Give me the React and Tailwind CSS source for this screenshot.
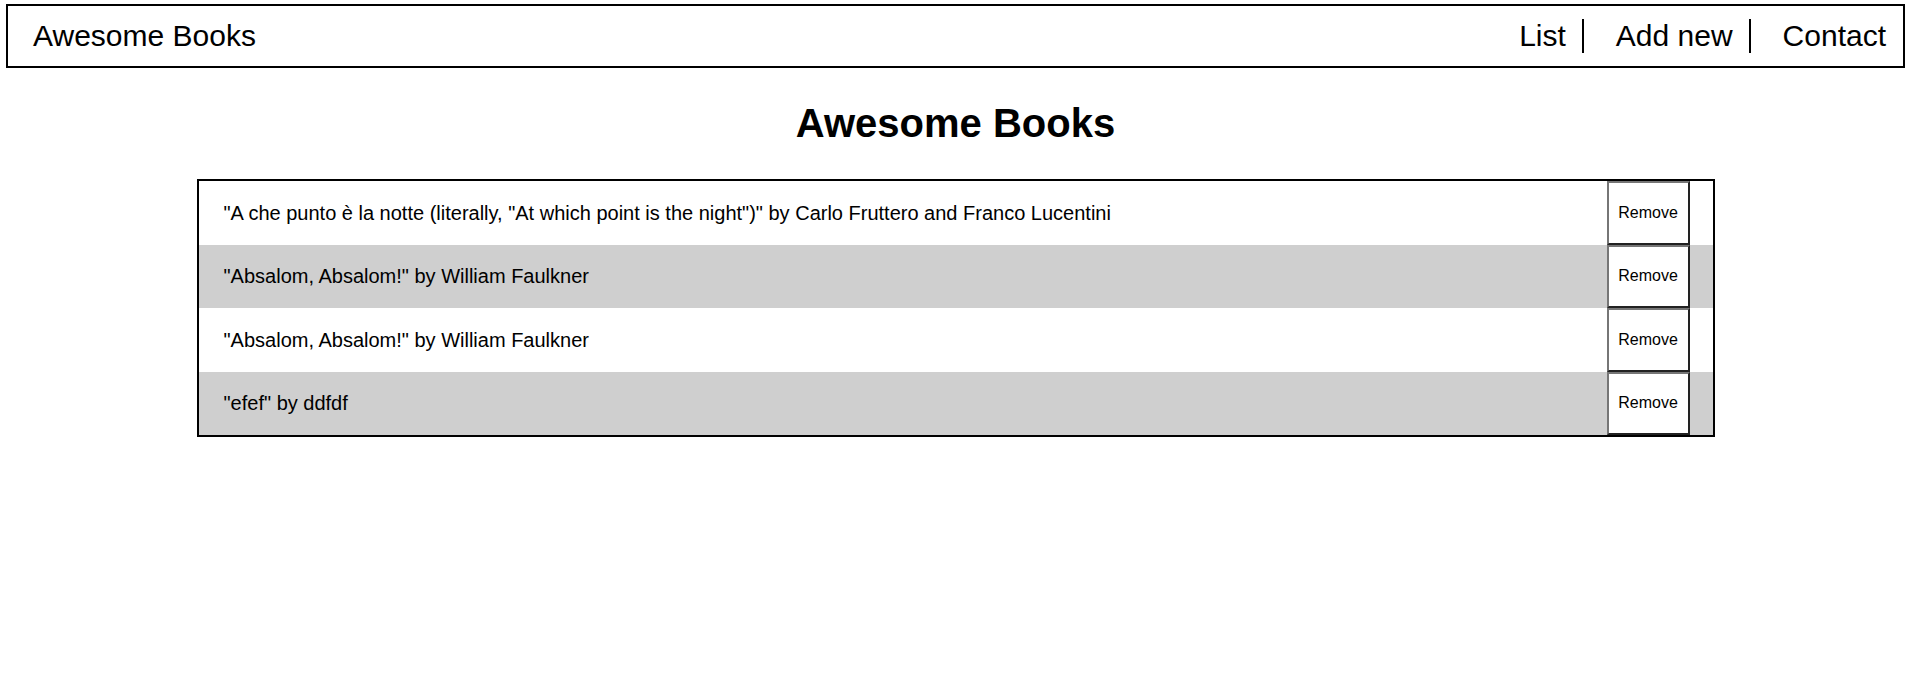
import React from 'react';

const books = [
  { title: 'A che punto è la notte (literally, "At which point is the night")', author: 'Carlo Fruttero and Franco Lucentini' },
  { title: 'Absalom, Absalom!', author: 'William Faulkner' },
  { title: 'Absalom, Absalom!', author: 'William Faulkner' },
  { title: 'efef', author: 'ddfdf' },
];

const links = ['List', 'Add new', 'Contact'];

export default function App() {
  return (
    <div className="min-h-[694px] bg-white pt-[4px] pl-[6px] font-['Liberation_Sans',Arial,sans-serif] text-black">
      <div className="w-[1899px]">
        <nav className="flex h-[64px] items-center justify-between border-2 border-black pl-[25px] pr-[1px]">
          <div className="text-[30px] leading-[normal]">Awesome Books</div>
          <ul className="flex items-center gap-4">
            {links.map((link, index) => (
              <li
                key={link}
                className={
                  index < links.length - 1
                    ? 'border-r-2 border-black px-4 text-[30px] leading-[normal]'
                    : 'px-4 text-[30px] leading-[normal]'
                }
              >
                {link}
              </li>
            ))}
          </ul>
        </nav>

        <h1 className="mt-[33px] mb-[33px] text-center text-[40px] font-bold leading-[normal]">Awesome Books</h1>

        <div className="mx-auto w-[1518px] border-2 border-black">
          {books.map((book, index) => (
            <div
              key={index.toString()}
              className={
                index % 2 === 1
                  ? 'flex h-[63.5px] items-center justify-between bg-[#cfcfcf] pl-[25px] pr-[23px]'
                  : 'flex h-[63.5px] items-center justify-between bg-white pl-[25px] pr-[23px]'
              }
            >
              <div className="text-[20px]">"{book.title}" by {book.author}</div>
              <button className="h-full w-[83px] border-2 border-t-[#767676] border-l-[#767676] border-b-[#222] border-r-[#222] bg-white text-[16px]">
                Remove
              </button>
            </div>
          ))}
        </div>
      </div>
    </div>
  );
}
